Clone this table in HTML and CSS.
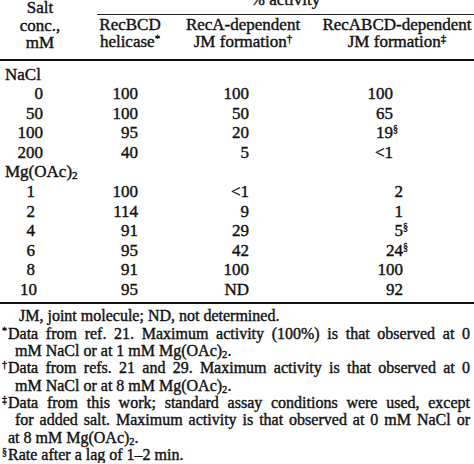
FILE: index.html
```html
<!DOCTYPE html>
<html lang="en">
<head>
<meta charset="utf-8">
<title>Salt effect on activity</title>
<link rel="stylesheet" href="styles.css">
</head>
<body>
<div class="sheet">
  <div class="head">
    <div class="stub">Salt<br>conc.,<br>mM</div>
    <div class="pct">% activity</div>
    <div class="ch c2">RecBCD<br>helicase<sup>*</sup></div>
    <div class="ch c3">RecA-dependent<br>JM formation<sup>†</sup></div>
    <div class="ch c4">RecABCD-dependent<br>JM formation<sup>‡</sup></div>
  </div>

  <div class="body">
    <div class="sec">NaCl</div>
    <div class="row na"><span class="c1">0</span><span class="c2">100</span><span class="c3">100</span><span class="c4">100</span></div>
    <div class="row na"><span class="c1">50</span><span class="c2">100</span><span class="c3">50</span><span class="c4">65</span></div>
    <div class="row na"><span class="c1">100</span><span class="c2">95</span><span class="c3">20</span><span class="c4">19<span class="mk">§</span></span></div>
    <div class="row na"><span class="c1">200</span><span class="c2">40</span><span class="c3">5</span><span class="c4">&lt;1</span></div>
    <div class="sec">Mg(OAc)<sub>2</sub></div>
    <div class="row mg"><span class="c1">1</span><span class="c2">100</span><span class="c3">&lt;1</span><span class="c4">2</span></div>
    <div class="row mg"><span class="c1">2</span><span class="c2">114</span><span class="c3">9</span><span class="c4">1</span></div>
    <div class="row mg"><span class="c1">4</span><span class="c2">91</span><span class="c3">29</span><span class="c4">5<span class="mk">§</span></span></div>
    <div class="row mg"><span class="c1">6</span><span class="c2">95</span><span class="c3">42</span><span class="c4">24<span class="mk">§</span></span></div>
    <div class="row mg"><span class="c1">8</span><span class="c2">91</span><span class="c3">100</span><span class="c4">100</span></div>
    <div class="row mg last"><span class="c1">10</span><span class="c2">95</span><span class="c3">ND</span><span class="c4">92</span></div>
  </div>

  <div class="notes">
    <div class="ln lead">JM, joint molecule; ND, not determined.</div>
    <div class="ln first full"><span class="fm">*</span>Data from ref. 21. Maximum activity (100%) is that observed at 0</div>
    <div class="ln cont">mM NaCl or at 1 mM Mg(OAc)<sub>2</sub>.</div>
    <div class="ln first full"><span class="fm">†</span>Data from refs. 21 and 29. Maximum activity is that observed at 0</div>
    <div class="ln cont">mM NaCl or at 8 mM Mg(OAc)<sub>2</sub>.</div>
    <div class="ln first full"><span class="fm">‡</span>Data from this work; standard assay conditions were used, except</div>
    <div class="ln cont full">for added salt. Maximum activity is that observed at 0 mM NaCl or</div>
    <div class="ln cont2">at 8 mM Mg(OAc)<sub>2</sub>.</div>
    <div class="ln first"><span class="fm">§</span>Rate after a lag of 1–2 min.</div>
  </div>
</div>
</body>
</html>
```

FILE: styles.css
```css
html, body {
  margin: 0;
  padding: 0;
  background: #ffffff;
  overflow: hidden;
}

.sheet {
  width: 474px;
  color: #111111;
  font-family: "Liberation Serif", "Times New Roman", serif;
  font-size: 17px;
  -webkit-text-stroke: 0.4px #111111;
}

/* ---------- header ---------- */
.head {
  display: grid;
  grid-template-columns: 90px 80px 146px 158px;
  grid-template-rows: auto auto;
  margin-top: -9.5px;
  padding-bottom: 7.5px;
  border-bottom: 2px solid #111;
  line-height: 17.5px;
}

.stub {
  grid-column: 1;
  grid-row: 1 / span 2;
  padding-top: 8.5px;
  padding-right: 10px;
  text-align: center;
}

.pct {
  grid-column: 2 / span 3;
  grid-row: 1;
  margin-left: 7px;
  padding-bottom: 5px;
  border-bottom: 1.5px solid #222;
  text-align: center;
}

.ch {
  grid-row: 2;
  padding-top: 1px;
  text-align: center;
  white-space: nowrap;
}
.ch.c2 { grid-column: 2; }
.ch.c3 { grid-column: 3; }
.ch.c4 { grid-column: 4; padding-left: 4px; }

.ch sup {
  font-size: 11px;
  line-height: 0;
  vertical-align: 5px;
}

/* ---------- body ---------- */
.body {
  padding-top: 3.5px;
  padding-bottom: 2.3px;
  border-bottom: 2px solid #111;
  line-height: 19.6px;
}

.sec {
  padding-left: 5px;
}
.sec sub, .ln sub {
  font-size: 0.66em;
  line-height: 0;
  vertical-align: -2px;
}

.row {
  display: grid;
  grid-template-columns: 90px 80px 146px 158px;
}
.row span { text-align: right; }
.row .c2 { padding-right: 32px; }
.row .c3 { padding-right: 67px; }

.row.na .c1 { padding-right: 47px; }
.row.na .c4 { padding-right: 81px; }
.row.mg .c1 { padding-right: 55px; }
.row.mg .c4 { padding-right: 71px; }
.row.last .c1 { padding-right: 53px; }

.mk {
  display: inline-block;
  width: 0;
  font-size: 10px;
  line-height: 0;
  vertical-align: 6px;
  text-align: left;
}

/* ---------- footnotes ---------- */
.notes {
  padding-top: 3.5px;
  font-size: 16px;
  line-height: 17.3px;
  padding-right: 4px;
}

.ln { white-space: nowrap; }
.ln.full {
  white-space: normal;
  text-align: justify;
  text-align-last: justify;
}
.ln.lead { padding-left: 19px; }
.ln.first { padding-left: 2px; }
.ln.cont { padding-left: 15px; }
.ln.cont2 { padding-left: 8px; }

.fm {
  display: inline-block;
  width: 6px;
  font-size: 10px;
  vertical-align: 5px;
  line-height: 0;
}
```
